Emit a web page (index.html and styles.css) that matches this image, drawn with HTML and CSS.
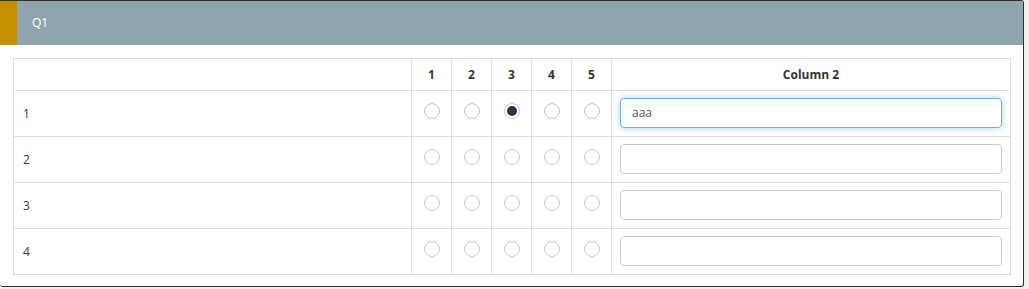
FILE: index.html
```html
<!DOCTYPE html>
<html>
<head>
<meta charset="utf-8">
<link rel="stylesheet" href="styles.css">
</head>
<body>
<div class="panel">
  <div class="panel-header">
    <div class="accent"></div>
    <div class="title">Q1</div>
  </div>
  <div class="panel-body">
    <table class="matrix">
      <thead>
        <tr>
          <th class="label-col"></th>
          <th class="rc">1</th><th class="rc">2</th><th class="rc">3</th><th class="rc">4</th><th class="rc">5</th>
          <th class="text-col">Column 2</th>
        </tr>
      </thead>
      <tbody>
        <tr>
          <td class="label">1</td>
          <td class="rc"><span class="radio"></span></td>
          <td class="rc"><span class="radio"></span></td>
          <td class="rc"><span class="radio checked"></span></td>
          <td class="rc"><span class="radio"></span></td>
          <td class="rc"><span class="radio"></span></td>
          <td class="tc"><div class="input focus">aaa</div></td>
        </tr>
        <tr>
          <td class="label">2</td>
          <td class="rc"><span class="radio"></span></td>
          <td class="rc"><span class="radio"></span></td>
          <td class="rc"><span class="radio"></span></td>
          <td class="rc"><span class="radio"></span></td>
          <td class="rc"><span class="radio"></span></td>
          <td class="tc"><div class="input"></div></td>
        </tr>
        <tr>
          <td class="label">3</td>
          <td class="rc"><span class="radio"></span></td>
          <td class="rc"><span class="radio"></span></td>
          <td class="rc"><span class="radio"></span></td>
          <td class="rc"><span class="radio"></span></td>
          <td class="rc"><span class="radio"></span></td>
          <td class="tc"><div class="input"></div></td>
        </tr>
        <tr>
          <td class="label">4</td>
          <td class="rc"><span class="radio"></span></td>
          <td class="rc"><span class="radio"></span></td>
          <td class="rc"><span class="radio"></span></td>
          <td class="rc"><span class="radio"></span></td>
          <td class="rc"><span class="radio"></span></td>
          <td class="tc"><div class="input"></div></td>
        </tr>
      </tbody>
    </table>
  </div>
</div>
</body>
</html>
```

FILE: styles.css
```css
html { background: #f0f0f0; }
body {
  margin: 0;
  font-family: "Open Sans", "Liberation Sans", sans-serif;
  font-size: 12px;
  color: #333;
}
.panel {
  width: 1024px;
  height: 287px;
  box-sizing: border-box;
  background: #fff;
  border: 1px solid #2e2e2e;
  border-left: none;
  border-radius: 0 3px 3px 3px;
  overflow: hidden;
}
.panel-header {
  display: flex;
  height: 44px;
  background: #90a4ad;
}
.accent {
  width: 17px;
  background: #c48f00;
}
.title {
  color: #fff;
  padding-left: 15px;
  line-height: 44px;
  font-size: 12px;
}
.panel-body {
  padding: 13px 13px 0 13px;
}
.matrix {
  width: 998px;
  border-collapse: collapse;
  table-layout: fixed;
}
.matrix th, .matrix td {
  border: 1px solid #dddddd;
  padding: 0;
}
.matrix th {
  height: 31px;
  font-weight: 700;
  font-size: 12px;
  color: #333;
  text-align: center;
}
.label-col { width: 397px; }
.rc { width: 39px; text-align: center; }
.matrix td { height: 45px; }
.label { padding-left: 9px !important; color: #3a3a3a; }
.radio {
  display: inline-block;
  width: 14px;
  height: 14px;
  border: 1px solid #c8c8c8;
  border-radius: 50%;
  vertical-align: middle;
  box-sizing: content-box;
  position: relative;
  top: -3px;
}
.radio.checked::after {
  content: "";
  position: absolute;
  left: 2px;
  top: 2px;
  width: 10px;
  height: 10px;
  border-radius: 50%;
  background: #253748;
}
.tc { padding: 0 8px !important; }
.input {
  height: 30px;
  margin-bottom: 2px;
  box-sizing: border-box;
  border: 1px solid #cccccc;
  border-radius: 4px;
  padding: 0 11px;
  line-height: 28px;
  font-size: 12px;
  color: #555;
}
.input.focus {
  border-color: #66afe9;
  box-shadow: 0 0 6px rgba(102,175,233,0.55);
}
```
